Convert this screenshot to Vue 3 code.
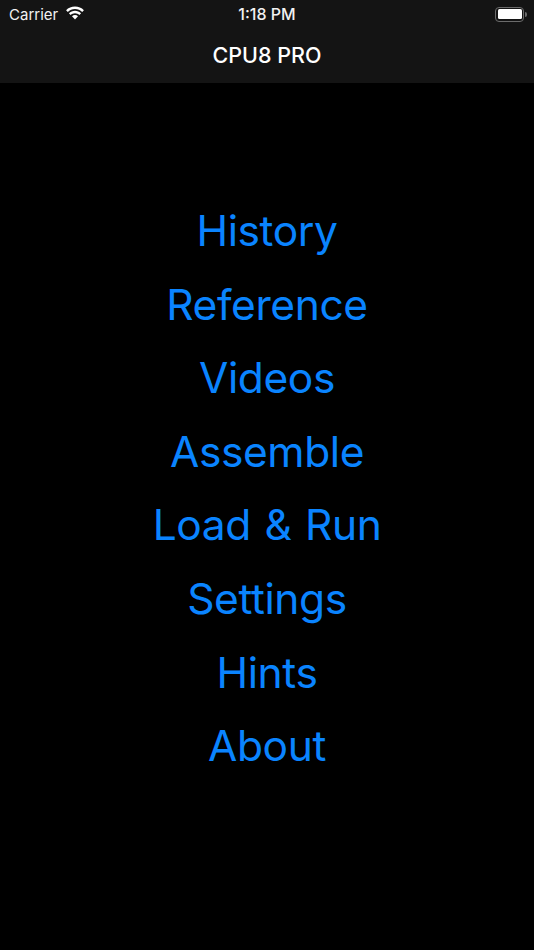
<script setup>
const items = ['History', 'Reference', 'Videos', 'Assemble', 'Load & Run', 'Settings', 'Hints', 'About']
</script>

<template>
  <div class="screen">
    <header class="bar">
      <div class="status">
        <div class="status-left">
          <span class="carrier">Carrier</span>
          <svg class="wifi" width="20" height="15" viewBox="0 0 20 15">
            <path d="M10 3.100c2.800 0 5.300 1.100 7.200 2.900l1.700-1.800C16.600 2 13.500.6 10 .6S3.400 2 1.100 4.200L2.800 6C4.700 4.200 7.200 3.100 10 3.100z" fill="#fff"/>
            <path d="M10 7.200c1.700 0 3.200.7 4.400 1.800l1.700-1.800C14.500 5.700 12.300 4.700 10 4.700S5.500 5.700 3.900 7.200L5.600 9c1.200-1.100 2.700-1.800 4.400-1.800z" fill="#fff"/>
            <path d="M10 9c-1.200 0-2.200.4-3 1.200l3 3.300 3-3.300C12.200 9.400 11.200 9 10 9z" fill="#fff"/>
          </svg>
        </div>
        <span class="time">1:18 PM</span>
        <div class="battery">
          <div class="battery-body"><div class="battery-fill"></div></div>
          <div class="battery-cap"></div>
        </div>
      </div>
      <h1 class="title">CPU8 PRO</h1>
    </header>
    <nav class="menu">
      <a v-for="item in items" :key="item" class="item">{{ item }}</a>
    </nav>
  </div>
</template>

<style scoped>
.screen {
  width: 534px;
  height: 950px;
  background: #000;
  display: flex;
  flex-direction: column;
  overflow: hidden;
  font-family: Inter, "Liberation Sans", sans-serif;
}
.bar {
  height: 83px;
  background: #141414;
  display: flex;
  flex-direction: column;
  flex: none;
}
.status {
  height: 28px;
  display: flex;
  align-items: center;
  justify-content: space-between;
  padding: 0 7px 0 9px;
  position: relative;
  color: #f2f2f2;
  font-size: 15px;
}
.status-left {
  display: flex;
  align-items: center;
  gap: 7px;
}
.wifi {
  display: block;
  margin-top: -1px;
}
.time {
  position: absolute;
  left: 0;
  right: 0;
  text-align: center;
  font-size: 16px;
  font-weight: 500;
}
.battery {
  display: flex;
  align-items: center;
  gap: 1px;
}
.battery-body {
  width: 29px;
  height: 15px;
  box-sizing: border-box;
  border: 1.500px solid #6b6b6b;
  border-radius: 4px;
  padding: 1.500px;
}
.battery-fill {
  width: 100%;
  height: 100%;
  background: #fff;
  border-radius: 1.500px;
}
.battery-cap {
  width: 2px;
  height: 5px;
  background: #6b6b6b;
  border-radius: 0 2px 2px 0;
}
.title {
  margin: 0;
  height: 55px;
  line-height: 54px;
  text-align: center;
  color: #fff;
  font-size: 21.500px;
  font-weight: 500;
}
.menu {
  display: flex;
  flex-direction: column;
  align-items: center;
  padding-top: 111px;
}
.item {
  height: 73.600px;
  line-height: 73.600px;
  color: #0a84ff;
  font-size: 42.500px;
  font-weight: 400;
  letter-spacing: -0.400px;
  word-spacing: 2px;
}
</style>

<style>
body { background: #000; }
</style>
